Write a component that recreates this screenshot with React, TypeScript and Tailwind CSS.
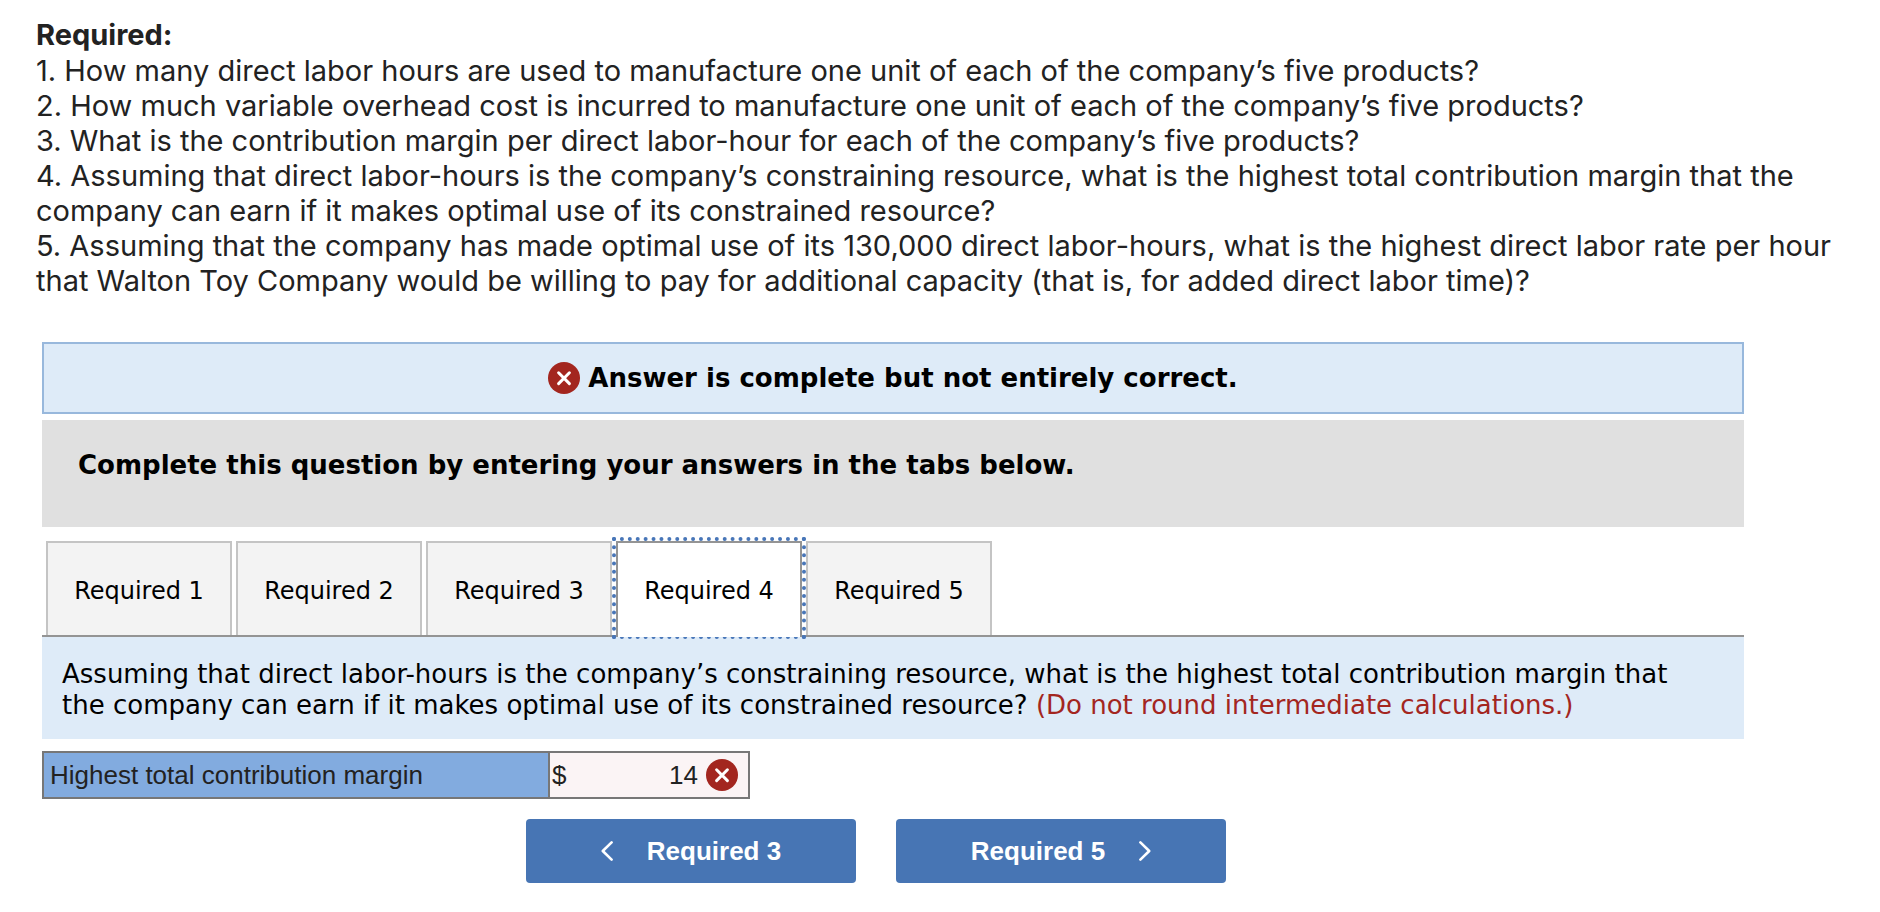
import { useState } from "react";

const questions = [
  "1. How many direct labor hours are used to manufacture one unit of each of the company’s five products?",
  "2. How much variable overhead cost is incurred to manufacture one unit of each of the company’s five products?",
  "3. What is the contribution margin per direct labor-hour for each of the company’s five products?",
  "4. Assuming that direct labor-hours is the company’s constraining resource, what is the highest total contribution margin that the company can earn if it makes optimal use of its constrained resource?",
  "5. Assuming that the company has made optimal use of its 130,000 direct labor-hours, what is the highest direct labor rate per hour that Walton Toy Company would be willing to pay for additional capacity (that is, for added direct labor time)?",
];

const tabs = ["Required 1", "Required 2", "Required 3", "Required 4", "Required 5"];

function WrongIcon() {
  return (
    <svg viewBox="0 0 32 32" className="size-8 shrink-0" role="img" aria-label="Incorrect">
      <circle cx="16" cy="16" r="16" fill="#a3261f" />
      <path d="M10.6 10.8l10.8 10.8M21.4 10.8L10.6 21.6" stroke="#fff" strokeWidth="3" strokeLinecap="round" />
    </svg>
  );
}

function Chevron({ direction }: { direction: "left" | "right" }) {
  return (
    <svg viewBox="0 0 12 20" className="h-5 w-3" fill="none" aria-hidden>
      <path
        d={direction === "left" ? "M10.6 1.4L1.8 10l8.8 8.6" : "M1.4 1.4l8.8 8.6-8.8 8.6"}
        stroke="#fff"
        strokeWidth="2.6"
        strokeLinecap="round"
        strokeLinejoin="round"
      />
    </svg>
  );
}

export default function App() {
  const [active, setActive] = useState(3);
  const [amount, setAmount] = useState("14");

  return (
    <main className="bg-white pb-8 text-black">
      <section className="pt-[17px] pr-2 pl-9 font-['Inter',sans-serif] text-[29px] leading-[35px] text-[#222]">
        <h1 className="leading-9 font-bold">Required:</h1>
        {questions.map((question) => (
          <p key={question.slice(0, 2)}>{question}</p>
        ))}
      </section>

      <section className="mt-11 mr-[136px] ml-[42px] font-['DejaVu_Sans',sans-serif]">
        <div className="flex h-[72px] items-center justify-center gap-2 border-2 border-[#98b8dc] bg-[#deebf8]">
          <WrongIcon />
          <strong className="text-[26px] leading-8">Answer is complete but not entirely correct.</strong>
        </div>

        <div className="mt-1.5 bg-[#e0e0e0] px-9 pt-[30px] pb-[46px]">
          <p className="text-[26px] leading-[31px] font-bold">
            Complete this question by entering your answers in the tabs below.
          </p>
        </div>

        <div role="tablist" className="mt-3.5 flex gap-1 border-b-2 border-[#949494] pl-1">
          {tabs.map((tab, i) => (
            <div
              key={tab}
              className={i === active ? "h-[94px] outline-4 outline-[#4876b8] outline-dotted" : "h-[94px]"}
            >
              <button
                type="button"
                role="tab"
                aria-selected={i === active}
                onClick={() => setActive(i)}
                className={
                  i === active
                    ? "relative h-24 w-[186px] border-2 border-b-0 border-[#949494] bg-white pt-0.5 text-2xl outline-none"
                    : "h-[94px] w-[186px] border-2 border-b-0 border-[#c4c4c4] bg-[#f3f3f3] pt-1 text-2xl"
                }
              >
                {tab}
              </button>
            </div>
          ))}
        </div>

        <div role="tabpanel">
          <p className="bg-[#deebf8] pt-[22px] pr-10 pb-[18px] pl-5 text-[26px] leading-[31px]">
            Assuming that direct labor-hours is the company’s constraining resource, what is the highest total
            contribution margin that the company can earn if it makes optimal use of its constrained resource?{" "}
            <span className="text-[#a3261f]">(Do not round intermediate calculations.)</span>
          </p>

          <div className="mt-3 flex h-12 w-[708px] border-2 border-[#777] font-['Liberation_Sans',sans-serif] text-[26px] leading-8 text-[#222]">
            <label htmlFor="margin" className="flex flex-1 items-center border-r-2 border-[#777] bg-[#82abdf] px-1.5">
              Highest total contribution margin
            </label>
            <div className="flex w-[198px] items-center gap-2 bg-[#fbf4f5] pr-2.5 pl-0.5">
              <span>$</span>
              <input
                id="margin"
                value={amount}
                onChange={(e) => setAmount(e.target.value)}
                className="min-w-0 flex-1 bg-transparent text-right outline-none"
              />
              <WrongIcon />
            </div>
          </div>
        </div>
      </section>

      <nav className="mt-5 mr-[136px] ml-[8px] flex justify-center gap-10 font-['Liberation_Sans',sans-serif] text-[26px] font-bold text-white">
        <button
          type="button"
          onClick={() => setActive(2)}
          className="flex h-16 w-[330px] items-center justify-center gap-[34px] rounded-sm bg-[#4775b4]"
        >
          <Chevron direction="left" />
          Required 3
        </button>
        <button
          type="button"
          onClick={() => setActive(4)}
          className="flex h-16 w-[330px] items-center justify-center gap-[34px] rounded-sm bg-[#4775b4]"
        >
          Required 5
          <Chevron direction="right" />
        </button>
      </nav>
    </main>
  );
}
